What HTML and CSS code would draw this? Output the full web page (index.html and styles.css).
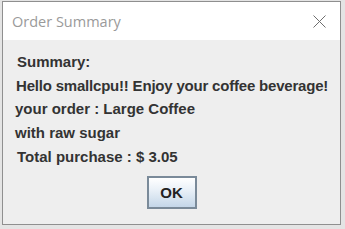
FILE: index.html
```html
<!DOCTYPE html>
<html>
<head>
<meta charset="utf-8">
<link rel="stylesheet" href="styles.css">
</head>
<body>
<div class="window">
  <div class="titlebar">
    <span class="title">Order Summary</span>
    <svg class="close" width="13" height="13" viewBox="0 0 13 13"><path d="M0.5 0.5L12.5 12.5M12.5 0.5L0.5 12.5" stroke="#6e6e6e" stroke-width="1" fill="none"/></svg>
  </div>
  <div class="content">
    <div class="line l1">Summary:</div>
    <div class="line l2">Hello smallcpu!! Enjoy your coffee beverage!</div>
    <div class="line l3">your order : Large Coffee</div>
    <div class="line l4">with raw sugar</div>
    <div class="line l5">Total purchase : $ 3.05</div>
    <div class="actions"><button class="ok">OK</button></div>
  </div>
</div>
</body>
</html>
```
FILE: styles.css
```css
html, body {
  margin: 0;
  padding: 0;
}
body {
  width: 345px;
  height: 229px;
  background: #e4e4e4;
  overflow: hidden;
}
.window {
  margin-left: 2px;
  margin-top: 1px;
  width: 337px;
  height: 222px;
  border: 1px solid #8f8f8f;
  background: #eeeeee;
  display: flex;
  flex-direction: column;
}
.titlebar {
  height: 38px;
  background: #ffffff;
  display: flex;
  align-items: center;
  justify-content: space-between;
  padding-left: 9px;
  padding-right: 14px;
}
.title {
  font-family: "Open Sans", "Noto Sans", sans-serif;
  font-size: 14.5px;
  color: #9a9a9a;
  margin-top: 1px;
}
.close {
  display: block;
  margin-top: 1px;
}
.content {
  flex: 1;
  padding-top: 10px;
  font-family: "Liberation Sans", Arial, sans-serif;
  font-weight: bold;
  font-size: 15px;
  color: #333333;
}
.line {
  height: 23.7px;
  line-height: 24px;
  white-space: nowrap;
}
.l1 { padding-left: 14px; }
.l2 { padding-left: 13px; letter-spacing: -0.2px; }
.l3 { padding-left: 12px; }
.l4 { padding-left: 12px; }
.l5 { padding-left: 14px; }
.actions {
  display: flex;
  justify-content: center;
  padding-top: 8px;
}
.ok {
  width: 50px;
  height: 33px;
  border: 2px solid #7a8a99;
  background: linear-gradient(#ffffff 0%, #eaf1f8 40%, #c4d6e8 100%);
  font-family: "Liberation Sans", Arial, sans-serif;
  font-weight: bold;
  font-size: 15px;
  color: #222222;
  padding: 0;
  margin: 0;
}
```
